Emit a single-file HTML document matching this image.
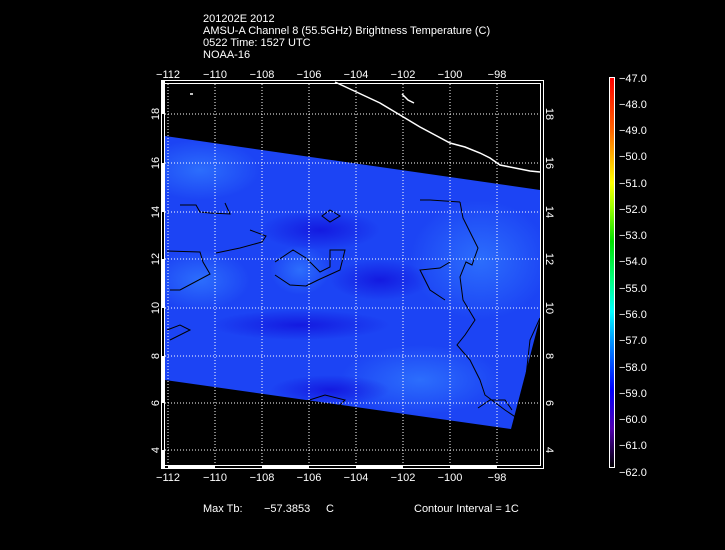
<!DOCTYPE html>
<html><head><style>
body{margin:0;background:#000;width:725px;height:550px;overflow:hidden;font-family:"Liberation Sans",sans-serif;}
svg{display:block}
text{fill:#fff;font-family:"Liberation Sans",sans-serif;font-size:11px}
</style></head><body>
<svg width="725" height="550" viewBox="0 0 725 550">
<defs>
<linearGradient id="cb" x1="0" y1="0" x2="0" y2="1">
<stop offset="0" stop-color="#ff0000"/>
<stop offset="0.13" stop-color="#ff6000"/>
<stop offset="0.27" stop-color="#ffff00"/>
<stop offset="0.33" stop-color="#a0ff00"/>
<stop offset="0.42" stop-color="#00e000"/>
<stop offset="0.52" stop-color="#00ff80"/>
<stop offset="0.6" stop-color="#00ffff"/>
<stop offset="0.68" stop-color="#0090ff"/>
<stop offset="0.8" stop-color="#0000ff"/>
<stop offset="0.9" stop-color="#5000b0"/>
<stop offset="1" stop-color="#000000"/>
</linearGradient>
<radialGradient id="lb" cx="0.5" cy="0.5" r="0.5"><stop offset="0" stop-color="#3078ff" stop-opacity="0.8"/><stop offset="1" stop-color="#3078ff" stop-opacity="0"/></radialGradient>
<radialGradient id="db" cx="0.5" cy="0.5" r="0.5"><stop offset="0" stop-color="#1008d8" stop-opacity="0.7"/><stop offset="1" stop-color="#1008d8" stop-opacity="0"/></radialGradient>
<clipPath id="sw"><polygon points="165,136 540,190 540,318 511,429 165,380"/></clipPath>
</defs>
<text x="203" y="22">201202E 2012</text>
<text x="203" y="34">AMSU-A Channel 8 (55.5GHz) Brightness Temperature (C)</text>
<text x="203" y="46">0522 Time: 1527 UTC</text>
<text x="203" y="58">NOAA-16</text>
<polygon points="165,136 540,190 540,318 511,429 165,380" fill="#1c44f4"/>
<g clip-path="url(#sw)">
<ellipse cx="200" cy="170" rx="60" ry="30" fill="url(#lb)"/>
<ellipse cx="300" cy="270" rx="30" ry="25" fill="url(#lb)"/>
<ellipse cx="480" cy="260" rx="70" ry="60" fill="url(#lb)"/>
<ellipse cx="200" cy="280" rx="50" ry="30" fill="url(#lb)"/>
<ellipse cx="420" cy="380" rx="80" ry="35" fill="url(#lb)"/>
<ellipse cx="320" cy="230" rx="60" ry="20" fill="url(#db)"/>
<ellipse cx="300" cy="325" rx="90" ry="15" fill="url(#db)"/>
<ellipse cx="330" cy="390" rx="60" ry="15" fill="url(#db)"/>
<ellipse cx="380" cy="280" rx="50" ry="20" fill="url(#db)"/>
</g>
<g fill="none" stroke="#000" stroke-width="1">
<path d="M180,205 L196,205 L200,212 L210,213 L230,214 L225,203"/>
<path d="M167,251 L200,252 L203,262 L210,274 L180,290 L170,290"/>
<path d="M216,253 L240,248 L262,242 L266,236 L250,230"/>
<path d="M275,262 L293,250 L306,258 L320,272 L330,267 L330,250 L345,250 L340,270 L318,280 L306,286 L290,285 L275,275"/>
<path d="M330,210 L340,216 L330,222 L322,216 Z"/>
<path d="M460,202 L463,218 L470,232 L478,248 L472,265 L466,262 L460,277 L463,300 L475,320 L465,335 L457,345 L470,360 L480,380 L485,395 L505,410 L517,418 L525,385 L530,340 L540,318"/>
<path d="M460,202 L430,200 L420,200"/>
<path d="M450,262 L440,268 L420,270 L430,290 L445,300"/>
<path d="M300,403 L325,395 L345,400 L340,405 L315,407"/>
<path d="M478,408 L490,400 L505,400 L512,410"/>
<path d="M167,330 L180,325 L190,330 L170,340"/>
</g>
<g fill="none" stroke="#fff" stroke-width="1.5">
<path d="M335,82 L350,89 L365,96 L380,103 L395,112 L405,118 L420,127 L435,135 L450,143 L465,147 L480,153 L490,158 L500,165 L515,168 L530,171 L540,172"/>
<path d="M402,94 L408,100 L414,103 M190,94 l3,0"/>
</g>
<g stroke="#fff" stroke-width="1" stroke-dasharray="1,2">
<path d="M168,84V466M215,84V466M262,84V466M309,84V466M356,84V466M403,84V466M450,84V466M497,84V466"/>
<path d="M165,114H540M165,163H540M165,212H540M165,259H540M165,308H540M165,356H540M165,403H540M165,450H540"/>
</g>
<rect x="161.5" y="80.5" width="382" height="388" fill="none" stroke="#fff"/>
<rect x="164.5" y="83.5" width="376" height="382" fill="none" stroke="#fff"/>
<rect x="161" y="80" width="4" height="34" fill="#fff"/><rect x="161" y="163" width="4" height="49" fill="#fff"/><rect x="161" y="259" width="4" height="49" fill="#fff"/><rect x="161" y="356" width="4" height="47" fill="#fff"/><rect x="161" y="450" width="4" height="18" fill="#fff"/>
<rect x="168" y="465" width="47" height="4" fill="#fff"/><rect x="262" y="465" width="47" height="4" fill="#fff"/><rect x="356" y="465" width="47" height="4" fill="#fff"/><rect x="450" y="465" width="47" height="4" fill="#fff"/>
<g text-anchor="middle">
<text x="168" y="78">−112</text><text x="215" y="78">−110</text><text x="262" y="78">−108</text><text x="309" y="78">−106</text><text x="356" y="78">−104</text><text x="403" y="78">−102</text><text x="450" y="78">−100</text><text x="497" y="78">−98</text>
<text x="168" y="481">−112</text><text x="215" y="481">−110</text><text x="262" y="481">−108</text><text x="309" y="481">−106</text><text x="356" y="481">−104</text><text x="403" y="481">−102</text><text x="450" y="481">−100</text><text x="497" y="481">−98</text>
</g>
<g text-anchor="middle">
<text transform="translate(159,114) rotate(-90)">18</text><text transform="translate(159,163) rotate(-90)">16</text><text transform="translate(159,212) rotate(-90)">14</text><text transform="translate(159,259) rotate(-90)">12</text><text transform="translate(159,308) rotate(-90)">10</text><text transform="translate(159,356) rotate(-90)">8</text><text transform="translate(159,403) rotate(-90)">6</text><text transform="translate(159,450) rotate(-90)">4</text>
<text transform="translate(546,114) rotate(90)">18</text><text transform="translate(546,163) rotate(90)">16</text><text transform="translate(546,212) rotate(90)">14</text><text transform="translate(546,259) rotate(90)">12</text><text transform="translate(546,308) rotate(90)">10</text><text transform="translate(546,356) rotate(90)">8</text><text transform="translate(546,403) rotate(90)">6</text><text transform="translate(546,450) rotate(90)">4</text>
</g>
<rect x="609.5" y="77.5" width="5" height="390" fill="url(#cb)" stroke="#fff"/>
<g font-size="11">
<text x="619" y="82">−47.0</text><text x="619" y="108">−48.0</text><text x="619" y="134">−49.0</text><text x="619" y="160">−50.0</text><text x="619" y="187">−51.0</text><text x="619" y="213">−52.0</text><text x="619" y="239">−53.0</text><text x="619" y="265">−54.0</text><text x="619" y="292">−55.0</text><text x="619" y="318">−56.0</text><text x="619" y="344">−57.0</text><text x="619" y="371">−58.0</text><text x="619" y="397">−59.0</text><text x="619" y="423">−60.0</text><text x="619" y="449">−61.0</text><text x="619" y="476">−62.0</text>
</g>
<text x="203" y="512">Max Tb:</text>
<text x="264" y="512">−57.3853</text>
<text x="326" y="512">C</text>
<text x="414" y="512">Contour Interval = 1C</text>
</svg>
</body></html>
